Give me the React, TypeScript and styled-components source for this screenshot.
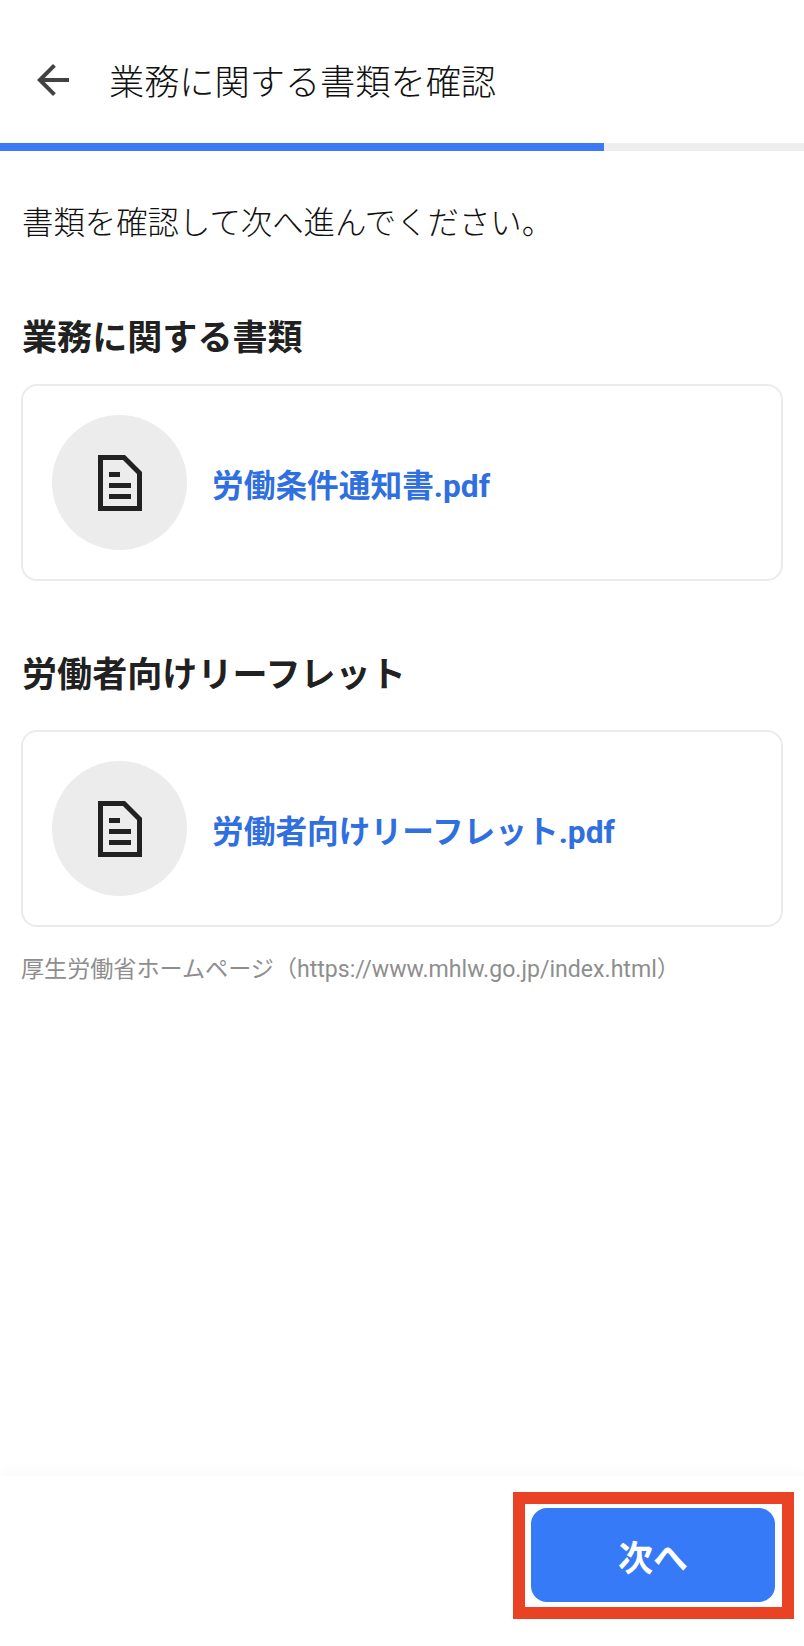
import React from "react"
import styled, { createGlobalStyle } from "styled-components"

const GlobalStyle = createGlobalStyle`
    * { box-sizing: border-box; }
    html, body { margin: 0; padding: 0; background: #fff; }
    body {
        font-family: Roboto, "Noto Sans CJK JP", sans-serif;
        color: #212121;
    }
`

const Page = styled.div`
    display: flex;
    flex-direction: column;
    width: 804px;
    height: 1646px;
    overflow: hidden;
`

const Header = styled.header`
    display: flex;
    align-items: center;
    gap: 32px;
    height: 143px;
    padding: 17px 0 0 29px;
`

const BackIcon = styled.svg`
    display: block;
    width: 48px;
    height: 48px;
    fill: #424242;
`

const HeaderTitle = styled.h1`
    margin: 0;
    padding-top: 6px;
    font-size: 35.2px;
    line-height: 48px;
    font-weight: 300;
    color: #111;
`

const Progress = styled.div`
    height: 8px;
    background: #eeeeee;
`

const ProgressFill = styled.div`
    height: 100%;
    background: #3b79f6;
`

const Content = styled.main`
    flex: 1;
    padding: 50px 22px 0 21px;
`

const Lead = styled.p`
    margin: 0;
    padding-left: 1px;
    font-size: 31.4px;
    line-height: 46px;
    font-weight: 300;
    color: #111;
`

const Section = styled.section<{ $top: number }>`
    margin-top: ${(p) => p.$top}px;
`

const SectionTitle = styled.h2<{ $gap: number }>`
    margin: 0 0 ${(p) => p.$gap}px;
    padding-left: 1px;
    font-size: 35.1px;
    line-height: 48px;
    font-weight: 700;
`

const FileCard = styled.a`
    display: flex;
    align-items: center;
    gap: 25px;
    width: 762px;
    height: 197px;
    padding: 0 0 0 29px;
    background: #fff;
    border: 2px solid #ebebeb;
    border-radius: 16px;
    text-decoration: none;
`

const FileIconCircle = styled.div`
    display: flex;
    align-items: center;
    justify-content: center;
    flex: none;
    width: 135px;
    height: 135px;
    border-radius: 50%;
    background: #ececec;
`

const FileIcon = styled.svg`
    display: block;
    width: 44px;
    height: 56px;
    fill: #212121;
`

const FileName = styled.span`
    padding-top: 9px;
    font-size: 31.7px;
    line-height: 44px;
    font-weight: 700;
    color: #2f6fe0;
`

const Note = styled.p`
    margin: 26px 0 0;
    font-size: 23.1px;
    line-height: 34px;
    font-weight: 400;
    color: #8e8e8e;
`

const Footer = styled.footer`
    display: flex;
    justify-content: flex-end;
    height: 170px;
    padding: 32px 29px 0 0;
    background: #fff;
    box-shadow: 0 -6px 12px rgba(0, 0, 0, 0.025);
`

const NextButton = styled.button`
    position: relative;
    width: 244px;
    height: 94px;
    border: none;
    border-radius: 16px;
    background: #367af7;
    color: #fff;
    font-family: inherit;
    font-size: 35px;
    font-weight: 700;
`

// 参考画像の赤い注釈枠
const Highlight = styled.span`
    position: absolute;
    top: -16px;
    right: -19px;
    bottom: -17px;
    left: -18px;
    border: 12px solid #ea4225;
    pointer-events: none;
`

const DocumentIcon = () => (
    <FileIcon viewBox="0 0 44 56">
        <path
            fillRule="evenodd"
            d="M0 0H27L44 17V56H0ZM5 5V51H39V19L25 5Z"
        />
        <rect x="11" y="17" width="11" height="5" />
        <rect x="11" y="28" width="22" height="5" />
        <rect x="11" y="39" width="22" height="5" />
    </FileIcon>
)

const FileLink = ({ name }: { name: string }) => (
    <FileCard href="#">
        <FileIconCircle>
            <DocumentIcon />
        </FileIconCircle>
        <FileName>{name}</FileName>
    </FileCard>
)

export default function App() {
    return (
        <Page>
            <GlobalStyle />
            <Header>
                <BackIcon viewBox="0 0 24 24">
                    <path d="M20 11H7.830l5.590-5.590L12 4l-8 8 8 8 1.410-1.410L7.830 13H20v-2z" />
                </BackIcon>
                <HeaderTitle>業務に関する書類を確認</HeaderTitle>
            </Header>
            <Progress>
                <ProgressFill style={{ width: `${(604 / 804) * 100}%` }} />
            </Progress>
            <Content>
                <Lead>書類を確認して次へ進んでください。</Lead>
                <Section $top={67}>
                    <SectionTitle $gap={22}>業務に関する書類</SectionTitle>
                    <FileLink name="労働条件通知書.pdf" />
                </Section>
                <Section $top={70}>
                    <SectionTitle $gap={31}>労働者向けリーフレット</SectionTitle>
                    <FileLink name="労働者向けリーフレット.pdf" />
                </Section>
                <Note>厚生労働省ホームページ（https://www.mhlw.go.jp/index.html）</Note>
            </Content>
            <Footer>
                <NextButton>
                    次へ
                    <Highlight />
                </NextButton>
            </Footer>
        </Page>
    )
}
